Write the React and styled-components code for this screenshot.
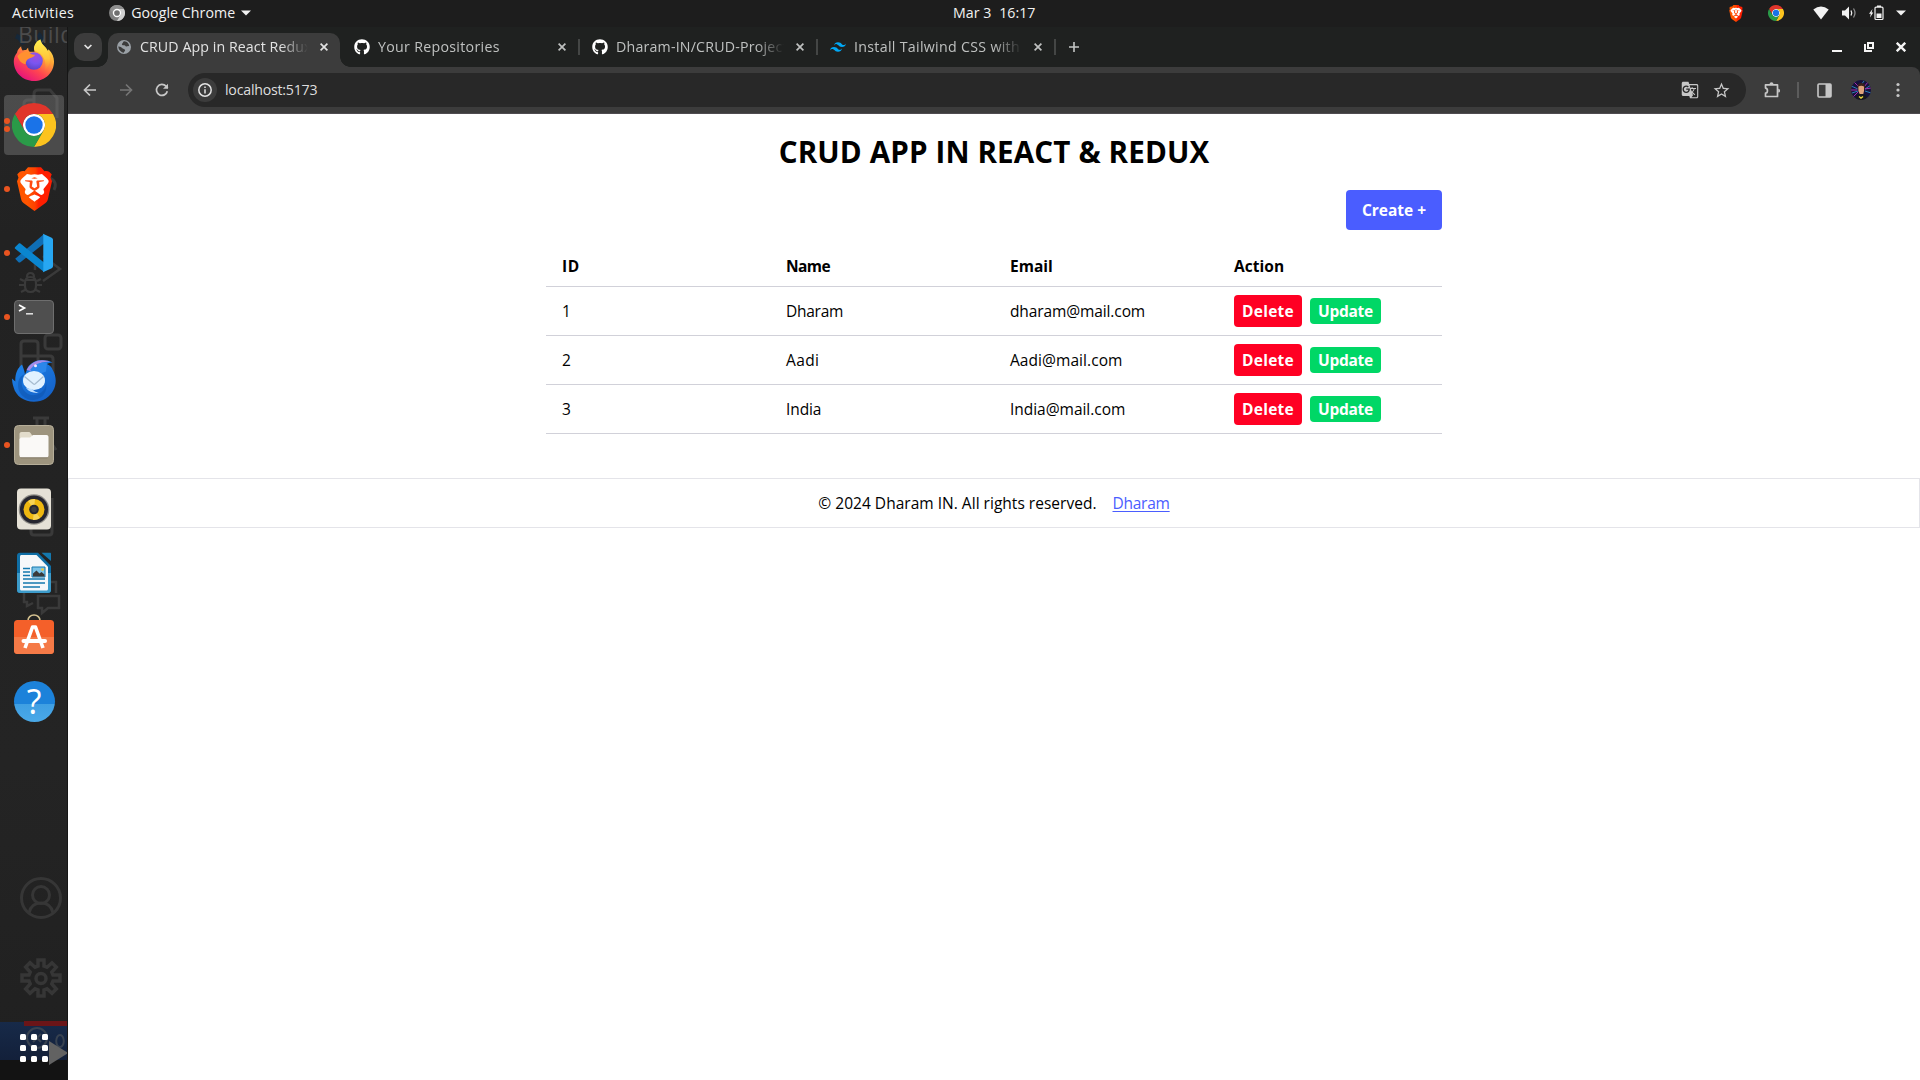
import React from "react";
import styled, { createGlobalStyle } from "styled-components";
import { FaGithub } from "react-icons/fa";
import { SiTailwindcss } from "react-icons/si";
import { MdStarBorder, MdGTranslate } from "react-icons/md";

const GlobalStyle = createGlobalStyle`
  *, *::before, *::after { box-sizing: border-box; }
  body { margin: 0; background: #fff; font-family: "Open Sans", "Noto Sans", sans-serif; overflow: hidden; }
  svg { display: block; flex: none; }
`;

/* ---------- shared ---------- */
const Text = styled.span`
  letter-spacing: ${(p) => p.$track || 0}px;
  white-space: nowrap;
`;

const Desktop = styled.div`
  width: 1920px;
  height: 1080px;
  display: flex;
  flex-direction: column;
  overflow: hidden;
`;

const Workspace = styled.div`
  flex: 1;
  min-height: 0;
  display: flex;
`;

/* ---------- system bar ---------- */
const SystemBar = styled.header`
  height: 27px;
  display: grid;
  grid-template-columns: 941px auto 1fr;
  align-items: center;
  padding: 0 14px 1px 12px;
  background: #1d1d1d;
  color: #f2f2f2;
  font-size: 14.2px;
  line-height: 26px;
`;
const BarStart = styled.div`
  display: flex;
  align-items: center;
`;
const AppMenu = styled.div`
  display: flex;
  align-items: center;
  gap: 6px;
  margin-left: 35px;
`;
const Clock = styled.div`
  display: flex;
  gap: 8px;
`;
const Tray = styled.div`
  display: flex;
  justify-content: flex-end;
  align-items: center;
`;
const TrayIcon = styled.span`
  display: flex;
  margin-left: ${(p) => p.$gap}px;
`;

/* ---------- dock ---------- */
const DockBar = styled.nav`
  position: relative;
  width: 68px;
  display: flex;
  flex-direction: column;
  justify-content: space-between;
  background: linear-gradient(#262626, #222 20%, #242424 70%, #202020);
  border-right: 1px solid #161616;
  overflow: hidden;
`;
const Backdrop = styled.div`
  position: absolute;
  inset: 0;
`;
const BackdropLabel = styled.span`
  position: absolute;
  left: 18px;
  top: -9px;
  font-size: 23px;
  line-height: 32px;
  letter-spacing: 0.4px;
  color: #4c4c4c;
`;
const Launchers = styled.div`
  position: relative;
  display: flex;
  flex-direction: column;
  padding-top: 2px;
`;
const Launcher = styled.div`
  position: relative;
  width: 68px;
  height: 64px;
  display: flex;
  align-items: center;
  justify-content: center;
`;
const Tile = styled.div`
  width: 60px;
  height: 60px;
  display: flex;
  align-items: center;
  justify-content: center;
  padding-bottom: ${(p) => p.$lift || 0}px;
  border-radius: 4px;
  background: ${(p) => (p.$active ? "rgba(130,130,130,0.42)" : "transparent")};
`;
const Dots = styled.div`
  position: absolute;
  left: 4px;
  top: 0;
  height: 64px;
  display: flex;
  flex-direction: column;
  justify-content: center;
  gap: 2px;
`;
const Dot = styled.i`
  width: 6px;
  height: 6px;
  border-radius: 50%;
  background: #e95420;
`;
const AppsButton = styled.div`
  position: relative;
  align-self: center;
  display: grid;
  grid-template-columns: repeat(3, 6px);
  gap: 5px;
  margin-bottom: 18px;
`;
const AppsDot = styled.i`
  height: 6px;
  border-radius: 1.5px;
  background: #fff;
`;

/* ---------- browser ---------- */
const Browser = styled.main`
  flex: 1;
  min-width: 0;
  display: flex;
  flex-direction: column;
  background: #fff;
`;
const TabStrip = styled.div`
  height: 40px;
  display: flex;
  align-items: center;
  padding: 0 13px 0 6px;
  background: #1f2120;
  color: #c4c6c5;
`;
const TabSearch = styled.div`
  width: 28px;
  height: 28px;
  display: flex;
  align-items: center;
  justify-content: center;
  border-radius: 10px;
  background: #3c3c3c;
  margin-right: 6px;
`;
const Tab = styled.div`
  position: relative;
  width: ${(p) => (p.$active ? 232 : 238)}px;
  margin-right: ${(p) => (p.$active ? 6 : 0)}px;
  height: ${(p) => (p.$active ? 34 : 40)}px;
  align-self: flex-end;
  display: flex;
  align-items: center;
  padding-left: 8px;
  padding-bottom: ${(p) => (p.$active ? 6 : 0)}px;
  border-radius: 10px 10px 0 0;
  background: ${(p) => (p.$active ? "#3c3c3c" : "transparent")};
  color: ${(p) => (p.$active ? "#e3e3e3" : "#bfc1c0")};
  &::before, &::after {
    content: "";
    display: ${(p) => (p.$active ? "block" : "none")};
    position: absolute;
    bottom: 0;
    width: 10px;
    height: 10px;
  }
  &::before { left: -10px; background: radial-gradient(circle at 0 0, transparent 9.5px, #3c3c3c 10px); }
  &::after { right: -10px; background: radial-gradient(circle at 100% 0, transparent 9.5px, #3c3c3c 10px); }
`;
const TabTitle = styled.div`
  width: 168px;
  margin-left: 8px;
  overflow: hidden;
  font-size: 14.2px;
  line-height: 20px;
  margin-top: -1px;
  mask-image: linear-gradient(90deg, #000 140px, transparent 168px);
`;
const TabClose = styled.span`
  display: flex;
  margin-left: 12px;
`;
const TabDivider = styled.i`
  width: 2px;
  height: 16px;
  margin-left: 12px;
  background: #444645;
`;
const NewTab = styled.span`
  display: flex;
  margin-left: 9px;
`;
const WindowButtons = styled.div`
  margin-left: auto;
  display: flex;
  align-items: center;
  gap: 22px;
  padding-right: 1px;
`;

const Toolbar = styled.div`
  height: 47px;
  display: flex;
  align-items: center;
  padding: 0 12px 0 12px;
  background: #3c3c3c;
  border-bottom: 1px solid #4f4c50;
`;
const ToolbarShell = styled.div`
  background: #1f2120;
  ${Toolbar} { border-radius: 8px 8px 0 0; }
`;
const NavButton = styled.span`
  width: 20px;
  display: flex;
  justify-content: center;
  margin-right: 16px;
`;
const Omnibox = styled.div`
  flex: none;
  width: 1558px;
  height: 34px;
  display: flex;
  align-items: center;
  border-radius: 17px;
  background: #282828;
  color: #dedede;
  padding: 0 15px 0 5px;
  font-size: 14.2px;
  line-height: 32px;
`;
const SiteInfo = styled.span`
  width: 24px;
  height: 24px;
  display: flex;
  align-items: center;
  justify-content: center;
  border-radius: 50%;
  background: #3c3c3c;
  margin-right: 8px;
`;
const OmniActions = styled.div`
  margin-left: auto;
  display: flex;
  align-items: center;
  gap: 13px;
  color: #c7c7c7;
`;
const ToolbarActions = styled.div`
  flex: 1;
  display: flex;
  align-items: center;
  padding-left: 18px;
  color: #c7c7c7;
`;
const ToolbarDivider = styled.i`
  width: 2px;
  height: 16px;
  background: #5c5c5c;
  margin: 0 18px 0 16px;
`;
const MenuDots = styled.span`
  display: flex;
  margin-left: auto;
`;
const Profile = styled.span`
  display: flex;
  margin-left: 19px;
`;

/* ---------- page ---------- */
const Page = styled.div`
  flex: 1;
  padding-top: 20px;
  color: #000;
  font-size: 15.5px;
  line-height: 24px;
`;
const Container = styled.section`
  width: 896px;
  margin: 0 auto;
  display: flex;
  flex-direction: column;
`;
const Title = styled.h1`
  margin: 0 0 20px;
  text-align: center;
  font-size: 29.6px;
  line-height: 36px;
  font-weight: 700;
  letter-spacing: 0.13px;
`;
const Button = styled.button`
  border: 0;
  border-radius: 4px;
  padding: 0;
  font: inherit;
  font-weight: 700;
  color: #fff;
  letter-spacing: ${(p) => p.$track || 0}px;
`;
const CreateButton = styled(Button)`
  align-self: flex-end;
  width: 96px;
  height: 40px;
  background: #4a5dff;
  margin-bottom: 16px;
`;
const DeleteButton = styled(Button)`
  width: 68px;
  height: 32px;
  background: #ff0023;
  margin-right: 8px;
`;
const UpdateButton = styled(Button)`
  width: 71px;
  height: 26px;
  background: #00d766;
`;
const Row = styled.div`
  height: ${(p) => (p.$head ? 41 : 49)}px;
  display: grid;
  grid-template-columns: repeat(4, 224px);
  align-items: center;
  border-bottom: 1px solid #d1d1d9;
  font-weight: ${(p) => (p.$head ? 700 : 400)};
`;
const Cell = styled.div`
  display: flex;
  align-items: center;
  padding-left: 16px;
`;
const Footer = styled.footer`
  height: 50px;
  margin-top: 44px;
  display: flex;
  align-items: center;
  justify-content: center;
  gap: 16px;
  border: 1px solid #e4e4e9;
`;
const FooterLink = styled.a`
  color: #4a5dff;
  text-decoration: underline;
  text-underline-offset: 2px;
  text-decoration-thickness: 1px;
  letter-spacing: -0.25px;
`;

/* ---------- icons ---------- */
const Chrome = ({ size }) => (
  <svg width={size} height={size} viewBox="0 0 48 48">
    <circle cx="24" cy="24" r="12" fill="#fff" />
    <path fill="#e0352b" d="M24 12H44.781a23.994 23.994 0 0 0-41.564.003L13.608 30l.009-.002A11.985 11.985 0 0 1 24 12Z" />
    <path fill="#fcc31e" d="M34.391 30.003 24.001 48A23.994 23.994 0 0 0 44.78 12.003H24l-.002.009a11.985 11.985 0 0 1 10.393 17.991Z" />
    <path fill="#2a9a48" d="M13.609 30.003 3.218 12.006A23.994 23.994 0 0 0 24.003 48l10.39-17.997-.006-.007a11.985 11.985 0 0 1-20.778.007Z" />
    <circle cx="24" cy="24" r="9.5" fill="#1a73e8" />
  </svg>
);

const MonoChrome = () => (
  <svg width="16" height="16" viewBox="0 0 48 48">
    <circle cx="24" cy="24" r="24" fill="#808080" />
    <path fill="#8f8f8f" d="M24 12H44.781a23.994 23.994 0 0 0-41.564.003L13.608 30A11.985 11.985 0 0 1 24 12Z" />
    <path fill="#cfcfcf" d="M34.391 30.003 24.001 48A23.994 23.994 0 0 0 44.78 12.003H24a11.985 11.985 0 0 1 10.391 18Z" />
    <circle cx="24" cy="24" r="12.500" fill="#fff" />
    <circle cx="24" cy="24" r="8.5" fill="#6f6f6f" />
  </svg>
);

const Firefox = () => (
  <svg width="42" height="42" viewBox="1 0 42 43">
    <defs>
      <linearGradient id="ffBody" x1="0.85" y1="0.15" x2="0.3" y2="1">
        <stop offset="0" stopColor="#ffe14a" />
        <stop offset="0.3" stopColor="#ffa436" />
        <stop offset="0.65" stopColor="#ff4550" />
        <stop offset="1" stopColor="#e5127d" />
      </linearGradient>
      <linearGradient id="ffTail" x1="0.5" y1="0" x2="0.5" y2="1">
        <stop offset="0" stopColor="#fff14f" />
        <stop offset="0.6" stopColor="#ffc53a" />
        <stop offset="1" stopColor="#ff8a2a" stopOpacity="0" />
      </linearGradient>
      <radialGradient id="ffGlobe" cx="0.6" cy="0.25" r="0.8">
        <stop offset="0" stopColor="#a04de0" />
        <stop offset="0.5" stopColor="#7a55f0" />
        <stop offset="1" stopColor="#5a41c4" />
      </radialGradient>
    </defs>
    <path fill="url(#ffBody)" d="M4.600 14c.500-2.500 2-4.500 4.200-6.500.100 1.700.600 3 1.500 4.200 1.300-.6 2.600-.7 3.700-.4.500-1 1.200-1.700 2-2.300 0 2 .6 3.200 1.500 4h5C21 8 24 2.500 28.500.5c.5 4 3 5.500 5.500 8.500 1.100 1.500 1.500 2.500 1.700 3.500.7-.5 1.100-1.300 1.200-2 4 4 5.600 8.500 5.600 12.500C42.500 34.500 33.500 43 22 43S1.300 34.200 1.300 22.800c0-3.300 1.200-6.100 3.300-8.800z" />
    <circle cx="22" cy="22.500" r="9" fill="url(#ffGlobe)" />
    <path fill="url(#ffTail)" d="M28.500.5c.5 4 3 5.500 5.500 8.500 5.500 6.500 6.500 17-1 24 2-9-.5-15-5-18.500-3-2-6-2-6-4.500C22 6 25 2 28.500.5z" />
    <path fill="#ff9030" d="M5 17.500c3-3.500 7-5 12-4.500 0 1.500 2.500 3 6 3.200-.300 2.200-2.800 2.500-4.500 3.200-2.500.900-5 2-5 6.500-3.500 0-7-3.500-8.500-8.400z" />
  </svg>
);

const Brave = ({ w, h, id }) => (
  <svg width={w} height={h} viewBox="0 0 36 44">
    <defs>
      <linearGradient id={id} x1="0" x2="1" y1="0" y2="0">
        <stop offset="0.3" stopColor="#ff5500" />
        <stop offset="0.52" stopColor="#ff4000" />
        <stop offset="0.62" stopColor="#ff1e00" />
      </linearGradient>
    </defs>
    <path fill={`url(#${id})`} d="M11.500.2h13l3.500 4c3-.8 5 .5 7.200 3l-1.200 3.500 1.500 3.500-4 17.500c-.6 2.500-1.500 3.500-3.500 5L18 44l-10-7.300c-2-1.500-2.900-2.500-3.500-5L.5 14.200 2 10.700.8 7.200c2.200-2.500 4.200-3.800 7.200-3z" />
    <path fill="#fff" d="M10.500 7l4 .8 3.500-.6 3.500.6 4-.8c2.500 2.500 5 4.200 6.500 6.500.5 1.500-.3 2.700-1 3.500l-4 5c-.5 1 1.300 2.300.5 4-.6 1.500-2.500 2.500-4 1.500-2-1.200-3.500-2.500-5.500-4-2 1.500-3.500 2.800-5.500 4-1.500 1-3.400 0-4-1.500-.8-1.700 1-3 .5-4L5 17c-.7-.8-1.500-2-1-3.500C5.500 11.200 8 9.500 10.500 7z" />
    <path fill="#ff4a12" d="M8.500 13.300l7 .2c.7.5.8 1.200.5 2L15.300 19.500 18 21.300l2.700-1.800-.7-4c-.3-.8-.2-1.500.5-2l7-.2-.3 1-4.500.7.300 5.200c-.300 1.500-3.500 2.700-5 3.800-1.500-1.100-4.700-2.300-5-3.800l.3-5.200-4.500-.7zM14.800 11.300l3.200-1 3.200 1-3.200.4z" />
    <path fill="#fff" d="M18 27.500c2.200.8 4.700 1.800 5.700 2.800-1.200 1.400-4 3-5.700 4.400-1.700-1.400-4.500-3-5.700-4.400 1-1 3.500-2 5.700-2.800z" />
  </svg>
);

const VSCode = () => (
  <svg width="40" height="40" viewBox="0 0 40 40">
    <path fill="#0f6eb5" d="M1.200 25.800 4.500 29.200c.6.500 1.300.5 1.900.1L30 10.500V1z" />
    <path fill="#0a86d0" d="M1.200 14 4.500 10.700c.6-.5 1.300-.6 1.900-.1L30 29.500V39L1.200 15.800c-.6-.5-.6-1.200 0-1.800z" />
    <path fill="#27a7f2" d="M29 .8l8.700 4c.9.500 1.300 1.200 1.300 2v26.400c0 .8-.400 1.500-1.300 2l-8.700 4c-.700.300-1.200.200-1.700-.300 1 .700 2 .300 2-.9V2c0-1.200-1-1.600-2-.9.500-.5 1-.6 1.700-.3z" />
  </svg>
);

const Terminal = () => (
  <svg width="42" height="36" viewBox="0 0 42 36">
    <rect x="1.500" y="1.500" width="39" height="33" rx="3.500" fill="#4f4f4f" stroke="#6e6e6e" />
    <path d="M6 6l5.500 3L6 12" fill="none" stroke="#fff" strokeWidth="1.700" />
    <path d="M13 14.800h7" stroke="#ddd" strokeWidth="1.600" />
  </svg>
);

const Thunderbird = () => (
  <svg width="44" height="44" viewBox="0 0 44 44">
    <defs>
      <linearGradient id="tbBody" x1="0" y1="0" x2="0.8" y2="1">
        <stop offset="0" stopColor="#1e86ee" />
        <stop offset="1" stopColor="#1460c6" />
      </linearGradient>
    </defs>
    <path fill="url(#tbBody)" d="M16 8C20 2.500 26 .800 31 1.300c4 .100 6.500.700 9.500 2.200-2.500.300-4.500.500-5.500 1.500 3 1.500 5 3.500 5.500 5.500 6 10 3.500 22-6.500 29C22 46.500 5 42 1.500 28 .300 24.500.200 22 0 19.500l3.300 3C3 15 5.500 9 10 5.500c1 2.500 2.500 6 3 10z" />
    <path fill="#0f53ad" d="M13 15c-3 3-4 8-3 12 1.500 6 7 10 13 9 7-1 11-6 11-13 2 9-3 17-12 18C12 41.500 4 33 6.500 22c1-3.500 3.500-6 6.500-7z" opacity=".55" />
    <path fill="#a58be8" d="M14.500 11C19 3 26 .700 31 1.300c3 .100 5 .500 7 1.200-7 .200-15 2-19 9.500z" />
    <path fill="#2b86ea" d="M18 11c4-6 10-8 17-7.500l-1 9-8 3z" />
    <circle cx="23.500" cy="6.800" r="1.500" fill="#f3e6ff" />
    <ellipse cx="22" cy="21.500" rx="11" ry="9.500" fill="#e2f2ff" />
    <path d="M20 30c1.500 2 4 3.300 7 3.800-5.500.600-10-1-13-4.800z" fill="#bfe0ff" />
    <path d="M12.500 17.500l9 7.500c.500.400 1 .400 1.500 0l8.500-7.500" fill="none" stroke="#a8bdd0" strokeWidth="1.300" />
  </svg>
);

const Files = () => (
  <svg width="42" height="42" viewBox="0 0 42 42">
    <rect x="1.500" y="1.500" width="39" height="39" rx="4" fill="#9d947e" stroke="#b6ae99" />
    <path d="M6.500 31V10c0-1.100.9-2 2-2h7c1 0 1.600.3 2.200 1.200L19.500 12H33c1.200 0 2 .8 2 2v18z" fill="#e2dccb" />
    <path d="M8 13.500h9l3-2.500h13.500c1.100 0 2 .9 2 2v18.500c0 1.100-.9 2-2 2h-25c-1.100 0-2-.9-2-2V15z" fill="#faf9f7" />
    <path d="M7.500 33.800h27" stroke="#7c745f" strokeWidth=".8" />
  </svg>
);

const Rhythmbox = () => (
  <svg width="36" height="42" viewBox="0 0 36 42">
    <rect x="1" y=".5" width="34" height="41" rx="4" fill="#e5e1d6" />
    <circle cx="18" cy="21.500" r="15.300" fill="#8f8d88" />
    <circle cx="18" cy="21.500" r="14" fill="#26262f" />
    <circle cx="18" cy="21.500" r="10.500" fill="#efb810" />
    <path d="M18 21.500 12 13a10.500 10.500 0 0 1 7-2zM18 21.500l6 8.500a10.500 10.500 0 0 1-7 2z" fill="#f7d355" />
    <circle cx="18" cy="21.500" r="4.800" fill="#26262f" />
    <circle cx="18" cy="21.500" r="2.700" fill="#3d3d3f" />
  </svg>
);

const Writer = () => (
  <svg width="36" height="42" viewBox="0 0 36 42">
    <path d="M4 .8h18L35 14v24c0 1.800-1.200 3-3 3H4c-1.800 0-3-1.200-3-3V3.800c0-1.800 1.200-3 3-3z" fill="#0f6ea5" />
    <path d="M1 21h34v17c0 1.800-1.200 3-3 3H4c-1.800 0-3-1.200-3-3z" fill="#3c9bca" />
    <path d="M5.500 3h15L32 14.800V37c0 .9-.6 1.500-1.500 1.500h-25c-.9 0-1.500-.6-1.500-1.500V4.500C4 3.600 4.600 3 5.500 3z" fill="#f6f8fa" />
    <path d="M25.500.800H34c.600 0 1 .4 1 1V9z" fill="#1478ae" />
    <path d="M7 16.500h7M7 20h7M7 23.500h7M7 27h22M7 31h22M7 35h17" stroke="#1478ae" strokeWidth="1.600" />
    <path d="M16 15h13v10H16z" fill="#7cc4e8" stroke="#1478ae" />
    <path d="M17 24.500v-3l3.500-3 3 3 2-1.500 3 2.500v2z" fill="#3a3a3a" />
    <circle cx="26.500" cy="17.500" r="1.300" fill="#f4c430" />
  </svg>
);

const Software = () => (
  <svg width="42" height="42" viewBox="0 0 42 42">
    <path d="M15 9V7.500c0-3 2.500-5.500 6-5.500s6 2.500 6 5.500V9" fill="none" stroke="#d5c290" strokeWidth="1.600" />
    <rect x="1" y="7" width="40" height="34" rx="3.500" fill="#f4602a" />
    <path d="M1 24h40v13.500c0 2-1.500 3.500-3.500 3.500h-33C2.500 41 1 39.500 1 37.500z" fill="#f57a47" />
    <path d="M12 35 19.500 14h3L30 35" fill="none" stroke="#fff" strokeWidth="3.600" strokeLinejoin="round" />
    <rect x="8.500" y="26" width="25.500" height="4" rx="2" fill="#fff" />
  </svg>
);

const HelpBadge = styled.span`
  width: 41px;
  height: 41px;
  display: flex;
  align-items: center;
  justify-content: center;
  border-radius: 50%;
  background: linear-gradient(#1c82da 55%, #3f9fe3 56%, #4aa9e8);
  color: #fff;
  font-size: 34px;
  line-height: 38px;
`;

const Globe = () => (
  <svg width="16" height="16" viewBox="0 0 16 16">
    <circle cx="8" cy="8" r="7" fill="#9aa0a6" />
    <path d="M8.500 2.200c-2 .3-1 1.500-2.200 2.200-.8.500-.3 1.500.5 1.800 1 .4 2.200-.2 2.700.8.300.7 1 .8 1.500.3l2.200-.3a5.500 5.500 0 0 0-4.700-4.800zM2.300 7.500c.2 3 2.500 5.800 5.500 6.200 0-1.200 1.500-1.400 1.300-2.700-.2-1-1.600-1-2.400-1.600C5.500 8.300 4 7.300 2.300 7.500z" fill="#3c3c3c" />
  </svg>
);

const Cross = ({ size = 8, w = 1.7, color = "currentColor" }) => (
  <svg width={size} height={size} viewBox="0 0 8 8">
    <path d="M.6.600l6.800 6.800M7.400.600.600 7.400" stroke={color} strokeWidth={w} />
  </svg>
);

const Caret = () => (
  <svg width="10" height="6" viewBox="0 0 10 6">
    <path d="M0 .5h10L5 5.500z" fill="#f2f2f2" />
  </svg>
);

const DockBackdrop = () => (
  <svg width="68" height="1053" viewBox="0 27 68 1053" fill="none" stroke="#3a3a3a" strokeWidth="3">
    <defs>
      <linearGradient id="blueBand" x1="0" y1="0" x2="0" y2="1">
        <stop offset="0" stopColor="#172a49" />
        <stop offset="1" stopColor="#13203a" />
      </linearGradient>
    </defs>
    <path d="M16 36q5 2 8 8M38 34q4 3 3 12" stroke="#16283a" strokeWidth="5" />
    <path d="M34 122V94q0-4 4-4h12l7 8v20M24 130v-26q0-4 4-4h6" />
    <path d="M50 178q8 4 4 12" />
    <path d="M35 260v10M43 256l17 13-17 12" strokeWidth="2.500" />
    <path d="M25 283q0-6 5.500-6t5.500 6v3q0 6-5.500 6t-5.500-6zM26 280h9M20 279l4 2M41 279l-4 2M19 285h5M42 285h-5M21 292l4-2M40 292l-4-2M27 277q0-4 3.500-4t3.500 4" strokeWidth="2.200" />
    <path d="M21 380v-36q0-3 3-3h11q3 0 3 3v30M21 356h29q3 0 3 3v15M38 356v20" />
    <rect x="45" y="335" width="16" height="14" rx="3" />
    <path d="M33 418h16M37 419v14M45 419v14M48 438l8 12" />
    <path d="M31 518v14q0 3 3 3h15q3 0 3-3v-34" />
    <path d="M38 596h21v12H48l-6 5v-5h-4zM50 582h6v11M24 592v10h3v4l6-3" strokeWidth="2.500" />
    <g stroke="#363636" strokeWidth="3">
      <circle cx="41" cy="898" r="19.500" />
      <circle cx="41" cy="895" r="8.500" />
      <path d="M29 913q2-10 12-10t12 10" />
    </g>
    <path
      stroke="#363636"
      strokeWidth="3.500"
      d="M38 966v-6h6v6l3 1.300 5-4.500 4.300 4.300-4.500 5L53 975h7v6h-7l-1.200 3 4.500 5-4.300 4.300-5-4.500-3 1.200v6h-6v-6l-3-1.200-5 4.500-4.300-4.300 4.500-5-1.200-3h-7v-6h7l1.200-3-4.500-5 4.300-4.300 5 4.500z"
    />
    <circle cx="41" cy="978.500" r="5" stroke="#363636" strokeWidth="3.500" />
    <path d="M0 1022h68v38H0z" fill="url(#blueBand)" stroke="none" />
    <path d="M0 1060h68v20H0z" fill="#131313" stroke="none" />
    <path d="M24 1021h44v5H24z" fill="#6b1518" stroke="none" />
    <circle cx="37" cy="1038" r="10" stroke="#384250" strokeWidth="2" />
    <path d="M33 1034l8 8M41 1034l-8 8" stroke="#384250" strokeWidth="2" />
    <ellipse cx="60" cy="1041" rx="3.800" ry="6" stroke="#384250" strokeWidth="2" />
    <path d="M49 1041l19 12-19 12z" fill="#626262" stroke="none" />
  </svg>
);

const Avatar = () => (
  <svg width="20" height="20" viewBox="0 0 20 20">
    <defs>
      <clipPath id="avatarClip"><circle cx="10" cy="10" r="10" /></clipPath>
    </defs>
    <g clipPath="url(#avatarClip)">
      <path fill="#17123d" d="M0 0h20v20H0z" />
      <path d="M0 6l7 3M1 13l6-2M13 1l-3 4M20 5l-6 4M20 13l-6-2" stroke="#2b7fb8" />
      <path d="M3 2l5 5M0 10h6M14 9l6-1M17 2l-4 5M2 17l5-5" stroke="#a72cb0" />
      <path d="M6.500 7q0-4 3.800-4T14 7v2H6.500z" fill="#3a221c" />
      <path d="M7.400 6.500q2.800-1.500 5.600 0v4.500q-.5 2-1 4h-3q-.6-2-1.600-4z" fill="#e0a27c" />
      <path d="M4.500 20q0-5.500 4-6h3.500q4 .5 4 6z" fill="#17181d" />
      <path d="M8 16.500l2 1.500 2-1.500" stroke="#e6d23c" fill="none" strokeWidth="1.500" />
    </g>
  </svg>
);

const Puzzle = () => (
  <svg width="17" height="17" viewBox="0 0 17 17" fill="none" stroke="#c7c7c7" strokeWidth="1.700">
    <path d="M1.500 2.800h12v11.700h-12v-3.300c2.600-.3 2.600-4.800 0-5.100z" strokeLinejoin="round" />
    <path d="M5.500 2.200a2 2 0 0 1 4 0zM14.200 6.800a1.900 1.900 0 0 1 0 3.800z" fill="#c7c7c7" stroke="none" />
  </svg>
);

/* ---------- data ---------- */
const launchers = [
  { name: "firefox", icon: <Firefox />, lift: 2 },
  { name: "chrome", icon: <Chrome size={44} />, dots: 2, active: true },
  { name: "brave", icon: <Brave w={37} h={44} id="braveDock" />, dots: 1 },
  { name: "code", icon: <VSCode />, dots: 1 },
  { name: "terminal", icon: <Terminal />, dots: 1 },
  { name: "mail", icon: <Thunderbird />, lift: 0 },
  { name: "files", icon: <Files />, dots: 1 },
  { name: "music", icon: <Rhythmbox /> },
  { name: "writer", icon: <Writer /> },
  { name: "software", icon: <Software />, lift: 7 },
  { name: "help", icon: <HelpBadge>?</HelpBadge> },
];

const tabs = [
  { title: "CRUD App in React Redux", track: 0.08, icon: <Globe />, active: true },
  { title: "Your Repositories", track: 0.3, icon: <FaGithub size={16} color="#fff" /> },
  { title: "Dharam-IN/CRUD-Project", track: 0.2, icon: <FaGithub size={16} color="#fff" /> },
  { title: "Install Tailwind CSS with Vite", track: 0.31, icon: <SiTailwindcss size={16} color="#00a8f5" /> },
];

const columns = [
  { label: "ID", track: 0.6 },
  { label: "Name", track: -0.6 },
  { label: "Email", track: 0 },
  { label: "Action", track: 0.06 },
];

const users = [
  { id: 1, name: "Dharam", nameTrack: -0.26, email: "dharam@mail.com", mailTrack: -0.11 },
  { id: 2, name: "Aadi", nameTrack: 0.4, email: "Aadi@mail.com", mailTrack: 0.06 },
  { id: 3, name: "India", nameTrack: -0.1, email: "India@mail.com", mailTrack: -0.03 },
];

function TopBar() {
  return (
    <SystemBar>
      <BarStart>
        <Text $track={0.37}>Activities</Text>
        <AppMenu>
          <MonoChrome />
          <Text $track={0.05}>Google Chrome</Text>
          <Caret />
        </AppMenu>
      </BarStart>
      <Clock>
        <Text>Mar 3</Text>
        <Text>16:17</Text>
      </Clock>
      <Tray>
        <TrayIcon $gap={0}><Brave w={14} h={17} id="braveTray" /></TrayIcon>
        <TrayIcon $gap={25}><Chrome size={16} /></TrayIcon>
        <TrayIcon $gap={29}>
          <svg width="16" height="14" viewBox="0 0 16 14"><path d="M8 13.500.300 3.500Q8-2.500 15.700 3.500z" fill="#f2f2f2" /></svg>
        </TrayIcon>
        <TrayIcon $gap={13}>
          <svg width="15" height="14" viewBox="0 0 15 14">
            <path d="M0 4.500h3l4-4v13l-4-4H0z" fill="#f2f2f2" />
            <path d="M9 4.500q1.500 2.500 0 5" stroke="#f2f2f2" strokeWidth="1.300" fill="none" />
            <path d="M11.500 2.500q3 4.500 0 9" stroke="#8f8f8f" strokeWidth="1.300" fill="none" />
          </svg>
        </TrayIcon>
        <TrayIcon $gap={12}>
          <svg width="15" height="16" viewBox="0 0 15 16">
            <path d="M3.500 4 0 8.800h1.800L1 12.500 4.300 7.500H2.600z" fill="#f2f2f2" />
            <rect x="6" y="2.200" width="8" height="12.300" rx="1" fill="none" stroke="#f2f2f2" strokeWidth="1.200" />
            <path d="M8 .5h4v1.500H8zM7.500 8.500h5v4.500h-5z" fill="#f2f2f2" />
          </svg>
        </TrayIcon>
        <TrayIcon $gap={12}><Caret /></TrayIcon>
      </Tray>
    </SystemBar>
  );
}

function Dock() {
  return (
    <DockBar>
      <Backdrop>
        <DockBackdrop />
        <BackdropLabel>Build</BackdropLabel>
      </Backdrop>
      <Launchers>
        {launchers.map((l) => (
          <Launcher key={l.name}>
            <Tile $active={l.active} $lift={l.lift}>{l.icon}</Tile>
            {l.dots && <Dots>{Array.from({ length: l.dots }, (_, i) => <Dot key={i} />)}</Dots>}
          </Launcher>
        ))}
      </Launchers>
      <AppsButton>
        {Array.from({ length: 9 }, (_, i) => <AppsDot key={i} />)}
      </AppsButton>
    </DockBar>
  );
}

function Tabs() {
  return (
    <TabStrip>
      <TabSearch>
        <svg width="8" height="6" viewBox="0 0 8 6"><path d="M.600 1 4 4.400 7.400 1" fill="none" stroke="#e3e3e3" strokeWidth="1.700" /></svg>
      </TabSearch>
      {tabs.map((t) => (
        <Tab key={t.title} $active={t.active}>
          {t.icon}
          <TabTitle><Text $track={t.track}>{t.title}</Text></TabTitle>
          <TabClose><Cross /></TabClose>
          {!t.active && <TabDivider />}
        </Tab>
      ))}
      <NewTab>
        <svg width="10" height="10" viewBox="0 0 10 10"><path d="M5 0v10M0 5h10" stroke="#c4c6c5" strokeWidth="1.600" /></svg>
      </NewTab>
      <WindowButtons>
        <svg width="10" height="10" viewBox="0 0 10 10"><path d="M0 8h10v2H0z" fill="#f5f5f5" /></svg>
        <svg width="10" height="10" viewBox="0 0 10 10">
          <path d="M4 1h5v5H4z" fill="none" stroke="#f5f5f5" strokeWidth="2" />
          <path d="M1 2v7h7" fill="none" stroke="#f5f5f5" strokeWidth="2" />
        </svg>
        <Cross size={10} w={1.900} color="#f5f5f5" />
      </WindowButtons>
    </TabStrip>
  );
}

const Arrow = ({ color, flip }) => (
  <svg width="14" height="14" viewBox="0 0 14 14" transform={flip ? "scale(-1 1)" : undefined}>
    <path d="M13 7H2M7 1.500 1.500 7 7 12.500" fill="none" stroke={color} strokeWidth="1.700" />
  </svg>
);

function AddressBar() {
  return (
    <ToolbarShell>
      <Toolbar>
        <NavButton><Arrow color="#c7c7c7" /></NavButton>
        <NavButton><Arrow color="#757575" flip /></NavButton>
        <NavButton>
          <svg width="14" height="14" viewBox="0 0 14 14">
            <path d="M12.300 8.200A5.500 5.500 0 1 1 11 3.200L12.800 5" fill="none" stroke="#c7c7c7" strokeWidth="1.700" />
            <path d="M13 .8v5H8z" fill="#c7c7c7" />
          </svg>
        </NavButton>
        <Omnibox>
          <SiteInfo>
            <svg width="14" height="14" viewBox="0 0 14 14">
              <circle cx="7" cy="7" r="6.200" fill="none" stroke="#e3e3e3" strokeWidth="1.500" />
              <path d="M7 6.200v4.300M7 3.500v1.600" stroke="#e3e3e3" strokeWidth="1.500" />
            </svg>
          </SiteInfo>
          <Text $track={-0.23}>localhost:5173</Text>
          <OmniActions>
            <MdGTranslate size={18} />
            <MdStarBorder size={19} />
          </OmniActions>
        </Omnibox>
        <ToolbarActions>
          <Puzzle />
          <ToolbarDivider />
          <svg width="15" height="15" viewBox="0 0 15 15">
            <rect x="1" y="1" width="13" height="13" rx="1" fill="none" stroke="#c7c7c7" strokeWidth="1.600" />
            <path d="M8.500 1h5.500v13H8.500z" fill="#c7c7c7" />
          </svg>
          <Profile><Avatar /></Profile>
          <MenuDots>
            <svg width="20" height="16" viewBox="0 0 20 16" fill="#c7c7c7">
              <circle cx="10" cy="2.500" r="1.600" /><circle cx="10" cy="8" r="1.600" /><circle cx="10" cy="13.500" r="1.600" />
            </svg>
          </MenuDots>
        </ToolbarActions>
      </Toolbar>
    </ToolbarShell>
  );
}

function CrudPage() {
  return (
    <Page>
      <Container>
        <Title>CRUD APP IN REACT &amp; REDUX</Title>
        <CreateButton>Create +</CreateButton>
        <Row $head>
          {columns.map((c) => (
            <Cell key={c.label}><Text $track={c.track}>{c.label}</Text></Cell>
          ))}
        </Row>
        {users.map((u) => (
          <Row key={u.id}>
            <Cell>{u.id}</Cell>
            <Cell><Text $track={u.nameTrack}>{u.name}</Text></Cell>
            <Cell><Text $track={u.mailTrack}>{u.email}</Text></Cell>
            <Cell>
              <DeleteButton $track={0.25}>Delete</DeleteButton>
              <UpdateButton $track={-0.28}>Update</UpdateButton>
            </Cell>
          </Row>
        ))}
      </Container>
      <Footer>
        <Text $track={0.02}>© 2024 Dharam IN. All rights reserved.</Text>
        <FooterLink>Dharam</FooterLink>
      </Footer>
    </Page>
  );
}

export default function App() {
  return (
    <>
      <GlobalStyle />
      <Desktop>
        <TopBar />
        <Workspace>
          <Dock />
          <Browser>
            <Tabs />
            <AddressBar />
            <CrudPage />
          </Browser>
        </Workspace>
      </Desktop>
    </>
  );
}
